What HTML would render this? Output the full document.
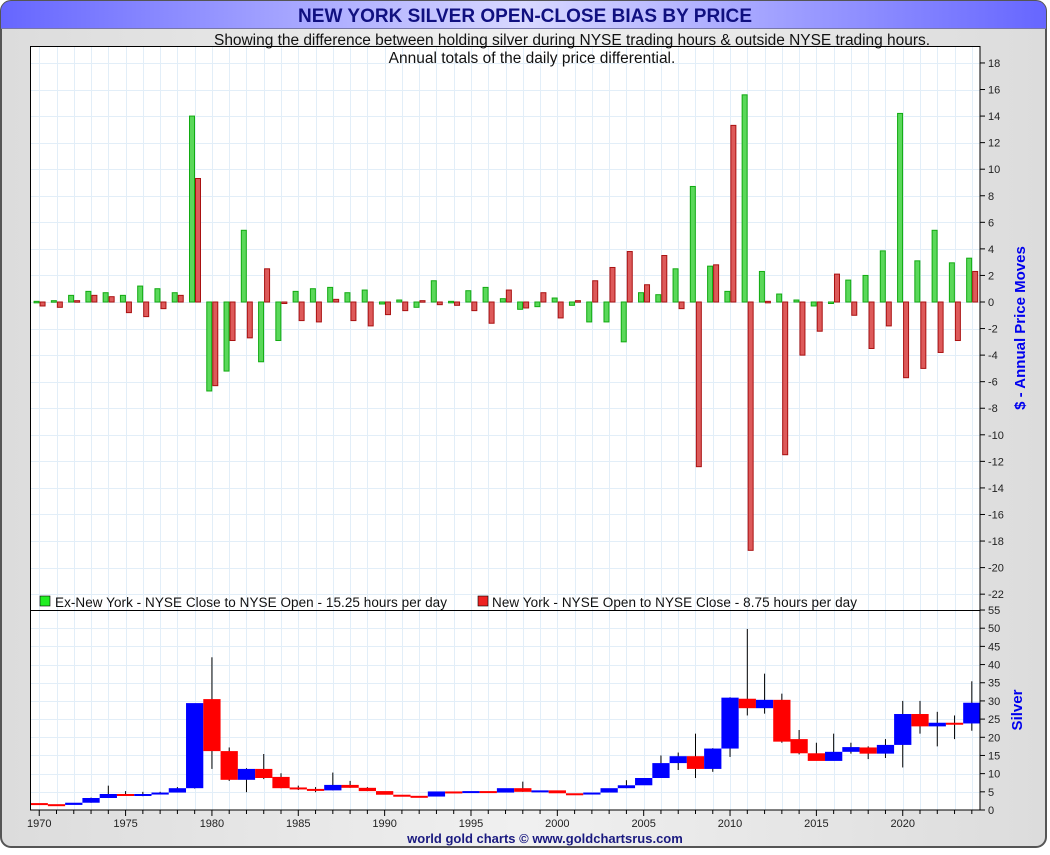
<!DOCTYPE html>
<html><head><meta charset="utf-8">
<style>
html,body{margin:0;padding:0;background:#fff;}
body{width:1050px;height:850px;overflow:hidden;font-family:"Liberation Sans",sans-serif;}
</style></head>
<body>
<svg id="s" width="1050" height="850" xmlns="http://www.w3.org/2000/svg" font-family="Liberation Sans, sans-serif">
<defs>
<linearGradient id="tb" x1="0" x2="1" y1="0" y2="0">
<stop offset="0" stop-color="#6666ff"/><stop offset="0.5" stop-color="#d8d8ff"/><stop offset="1" stop-color="#6666ff"/>
</linearGradient>
<linearGradient id="bg" x1="0" x2="1" y1="0" y2="0">
<stop offset="0" stop-color="#dcdcdc"/><stop offset="0.5" stop-color="#f0f0f0"/><stop offset="1" stop-color="#dcdcdc"/>
</linearGradient>
</defs>
<rect x="1" y="1" width="1045" height="846" rx="10" fill="url(#bg)" stroke="#555" stroke-width="2"/>
<path d="M1 28 V11 A10 10 0 0 1 11 1 H1036 A10 10 0 0 1 1046 11 V28 Z" fill="url(#tb)"/>
<line x1="1" y1="28.5" x2="1046" y2="28.5" stroke="#7777aa"/>
<text x="525" y="22" text-anchor="middle" font-size="19" font-weight="bold" fill="#101080" textLength="454">NEW YORK SILVER OPEN-CLOSE BIAS BY PRICE</text>
<rect x="30" y="46" width="950" height="764" fill="#fff"/>
<g id="grid"></g>
<text x="572" y="45" text-anchor="middle" font-size="15.5" fill="#111" textLength="716">Showing the difference between holding silver during NYSE trading hours &amp; outside NYSE trading hours.</text>
<text x="532" y="63" text-anchor="middle" font-size="15.5" fill="#111">Annual totals of the daily price differential.</text>
<g id="bars"></g>
<g id="candles"></g>
<rect x="40" y="596" width="10" height="10" fill="#22ee22" stroke="#000" stroke-width="0.6"/>
<text x="55" y="607" font-size="13.5" fill="#111" textLength="392">Ex-New York - NYSE Close to NYSE Open - 15.25 hours per day</text>
<rect x="478" y="596" width="10" height="10" fill="#ee2222" stroke="#000" stroke-width="0.6"/>
<text x="492" y="607" font-size="13.5" fill="#111" textLength="365">New York - NYSE Open to NYSE Close - 8.75 hours per day</text>
<rect x="30.5" y="46.5" width="949.5" height="763.5" fill="none" stroke="#000"/>
<line x1="30" y1="610.5" x2="980" y2="610.5" stroke="#000"/>
<g id="axis" font-size="11" fill="#222"></g>
<text transform="translate(1025,328) rotate(-90)" text-anchor="middle" font-size="15" font-weight="bold" fill="#0000ee">$ - Annual Price Moves</text>
<text transform="translate(1022,710) rotate(-90)" text-anchor="middle" font-size="15" font-weight="bold" fill="#0000ee">Silver</text>
<text x="545" y="843" text-anchor="middle" font-size="13" font-weight="bold" fill="#1a1a80">world gold charts © www.goldchartsrus.com</text>
</svg>
<script>
var NS="http://www.w3.org/2000/svg";
function el(p,t,a,txt){var e=document.createElementNS(NS,t);for(var k in a)e.setAttribute(k,a[k]);if(txt!==undefined)e.textContent=txt;document.getElementById(p).appendChild(e);return e;}
var W=17.27, X0=30.6;
function cx(y){return X0+W*(y-1970)+W/2;}
function ty(v){return 302-v*13.28;}
function by(v){return 810-v*3.636;}
for(var y=1970;y<=2024;y++){var x=Math.round(cx(y))+0.5;el("grid","line",{x1:x,y1:46,x2:x,y2:810,stroke:"#e2eef8"});}
for(var v=-22;v<=18;v+=2){var yy=Math.round(ty(v))+0.5;el("grid","line",{x1:30,y1:yy,x2:980,y2:yy,stroke:"#e2eef8"});}
for(var v=5;v<55;v+=5){var yy=Math.round(by(v))+0.5;el("grid","line",{x1:30,y1:yy,x2:980,y2:yy,stroke:"#e2eef8"});}
for(var v=-22;v<=18;v+=2){var yy=ty(v);el("axis","line",{x1:980,y1:yy,x2:985,y2:yy,stroke:"#000"});el("axis","text",{x:988,y:yy+4},String(v));}
for(var v=0;v<=55;v+=5){var yy=by(v);el("axis","line",{x1:980,y1:yy,x2:985,y2:yy,stroke:"#000"});if(v<55)el("axis","text",{x:988,y:yy+4},String(v));}
el("axis","text",{x:988,y:614},"55");
for(var y=1970;y<=2024;y++){var x=cx(y);el("axis","line",{x1:x,y1:810,x2:x,y2:(y%5==0?816:814),stroke:"#000"});if(y%5==0)el("axis","text",{x:x,y:827,"text-anchor":"middle"},String(y));}
var G=[0.05,0.1,0.5,0.8,0.7,0.5,1.2,1.0,0.7,14.0,-6.7,-5.2,5.4,-4.5,-2.9,0.8,1.0,1.1,0.7,0.9,-0.15,0.15,-0.4,1.6,0.05,0.85,1.1,0.25,-0.55,-0.35,0.3,-0.25,-1.5,-1.5,-3.0,0.7,0.55,2.5,8.7,2.7,0.8,15.6,2.3,0.6,0.15,-0.3,0,1.65,2.0,3.85,14.2,3.1,5.4,2.95,3.3];
var R=[-0.3,-0.4,0.1,0.5,0.4,-0.8,-1.1,-0.5,0.5,9.3,-6.3,-2.9,-2.7,2.5,-0.1,-1.4,-1.5,0.2,-1.4,-1.8,-0.95,-0.65,0.1,-0.2,-0.25,-0.65,-1.6,0.9,-0.45,0.7,-1.2,0.1,1.6,2.6,3.8,1.3,3.5,-0.5,-12.4,2.8,13.3,-18.7,0.05,-11.5,-4.0,-2.2,2.1,-1.0,-3.5,-1.8,-5.7,-5.0,-3.8,-2.9,2.3];
function bar(x,v,f,s){var a=ty(0),b=ty(v);var t=Math.min(a,b),h=Math.max(Math.abs(a-b),1.5);el("bars","rect",{x:x+0.5,y:t,width:5,height:h,fill:f,stroke:s,"stroke-width":1});}
for(var i=0;i<G.length;i++){var gl=189+W*(i-9);bar(gl,G[i],"#5ad85a","#11aa11");bar(gl+6,R[i],"#dd5a5a","#aa1111");}
var C=[[1.9,1.6],[1.6,1.4],[1.4,2.0],[2.0,3.3,3.4],[3.3,4.4,6.7,3.3],[4.4,4.2,5.2,3.9],[4.2,4.4,5.0,3.8],[4.4,4.8,5.0],[4.8,6.0,6.3],[6.0,29.4,6.2,5.9],
[30.5,16.2,42,11.3],[16.2,8.3,17.2,8],[8.3,11.3,11.5,4.9],[11.3,8.8,15.4,8.5],[9.1,6.0,10.1],[6.2,5.8,6.7,5.5],[5.8,5.4,6.3,4.9],[5.4,6.9,10.3],[6.9,6.1,8],[6.1,5.2,6.3],
[5.2,4.2],[4.2,3.9],[3.9,3.7],[3.7,5.1],[5.1,4.9],[4.9,5.2],[5.2,4.8],[4.8,6.0],[6.0,5.0,7.8],[5.0,5.4],
[5.4,4.6],[4.6,4.55],[4.6,4.8],[4.8,6.0],[6.0,6.8,8.2],[6.8,8.8],[8.8,12.9,15],[12.9,14.8,15.8,11],[14.8,11.3,21,8.8],[11.3,16.9,17,10.5],
[16.9,30.9,31,14.6],[30.6,28,49.8,26],[28,30.3,37.5,26.5],[30.3,18.8,32,18.5],[19.5,15.6,22,15.3],[15.6,13.5,18.5,13.6],[13.5,16.0,21,13.6],[16,17.3,18.5,15.5],[17.2,15.5,17.5,14],[15.5,17.9,19.5,14.3],
[17.9,26.4,30,11.7],[26.4,23,30,21],[23,24,27,17.5],[24,23.8,26,19.5],[23.8,29.5,35.4,21.8]];
for(var i=0;i<C.length;i++){var c=C[i],x=X0+W*i,m=cx(1970+i);var up=c[1]>=c[0];var col=up?"#0000ff":"#ff0000";
if(c[2]!==undefined){var hi=c[2],lo=c[3]!==undefined?c[3]:Math.min(c[0],c[1]);el("candles","line",{x1:m,y1:by(hi),x2:m,y2:by(lo),stroke:"#000","stroke-width":1});}
var t=by(Math.max(c[0],c[1])),b=by(Math.min(c[0],c[1]));el("candles","rect",{x:x,y:t,width:W,height:Math.max(b-t,2),fill:col});}
</script>
</body></html>
